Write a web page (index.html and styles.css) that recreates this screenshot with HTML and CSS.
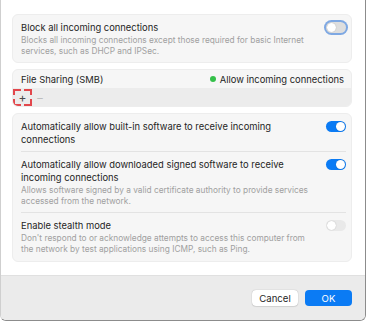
FILE: index.html
```html
<!DOCTYPE html>
<html>
<head>
<meta charset="utf-8">
<link rel="stylesheet" href="styles.css">
</head>
<body>
<div class="window">
  <div class="content">
    <section class="card">
      <div class="row">
        <div class="text">
          <div class="title">Block all incoming connections</div>
          <div class="desc">Blocks all incoming connections except those required for basic Internet services, such as DHCP and IPSec.</div>
        </div>
        <span class="toggle off focus"><span class="knob"></span></span>
      </div>
    </section>

    <section class="card list">
      <div class="app-row">
        <span class="app-name">File Sharing (SMB)</span>
        <span class="status"><span class="dot"></span>Allow incoming connections</span>
      </div>
      <div class="toolbar">
        <span class="tool add">+
          <svg class="mark" width="19" height="17" viewBox="0 0 19 17"><path d="M1 6V1H8M11 1H18V6M18 10V16H11M8 16H1V10" fill="none" stroke="#e2474c" stroke-width="2"/></svg>
        </span>
        <span class="tool remove">−</span>
      </div>
    </section>

    <section class="card">
      <div class="row sep">
        <div class="text">
          <div class="title">Automatically allow built-in software to receive incoming connections</div>
        </div>
        <span class="toggle on"><span class="knob"></span></span>
      </div>
      <div class="row sep">
        <div class="text">
          <div class="title">Automatically allow downloaded signed software to receive incoming connections</div>
          <div class="desc">Allows software signed by a valid certificate authority to provide services accessed from the network.</div>
        </div>
        <span class="toggle on"><span class="knob"></span></span>
      </div>
      <div class="row last">
        <div class="text">
          <div class="title">Enable stealth mode</div>
          <div class="desc">Don't respond to or acknowledge attempts to access this computer from the network by test applications using ICMP, such as Ping.</div>
        </div>
        <span class="toggle off dim"><span class="knob"></span></span>
      </div>
    </section>
  </div>
  <footer class="footer">
    <button class="btn cancel">Cancel</button>
    <button class="btn ok">OK</button>
  </footer>
</div>
</body>
</html>
```
FILE: styles.css
```css
html, body {
  margin: 0;
  padding: 0;
  background: #ffffff;
}
body {
  font-family: "Inter", "Liberation Sans", sans-serif;
  color: #1f1f1f;
  width: 368px;
  height: 323px;
  overflow: hidden;
}
.window {
  width: 366px;
  height: 321px;
  border-right: 1px solid #8c8c8c;
  border-bottom: 1px solid #8c8c8c;
  border-left: 1px solid #cfcfcf;
  border-bottom-left-radius: 6px;
  border-bottom-right-radius: 6px;
  box-sizing: border-box;
  display: flex;
  flex-direction: column;
  overflow: hidden;
}
.content {
  padding: 14px 13px 0 11px;
  display: flex;
  flex-direction: column;
  gap: 6px;
  flex: 1;
}
.card {
  background: #f6f6f6;
  border: 1px solid #ededed;
  border-radius: 6px;
  padding: 0 5px 0 8px;
}
.row {
  display: flex;
  align-items: flex-start;
  justify-content: space-between;
  padding: 6px 0 5px;
  gap: 10px;
}
.row.sep {
  border-bottom: 1px solid #e3e3e3;
}
.row.last {
  padding-bottom: 6px;
}
.title {
  font-size: 9.4px;
  line-height: 13px;
  color: #1f1f1f;
}
.desc {
  font-size: 8.3px;
  line-height: 11px;
  color: #a0a0a0;
  margin-top: 1px;
}
.toggle {
  flex: none;
  width: 20px;
  height: 11px;
  border-radius: 6px;
  position: relative;
  margin-top: 1px;
}
.toggle .knob {
  position: absolute;
  top: 1px;
  width: 9px;
  height: 9px;
  border-radius: 50%;
  background: #ffffff;
  box-shadow: 0 0 1px rgba(0,0,0,0.3);
}
.toggle.on {
  background: #0b7bf4;
}
.toggle.on .knob {
  right: 1px;
}
.toggle.off {
  background: #dedede;
}
.toggle.off .knob {
  left: 1px;
}
.toggle.focus {
  box-shadow: 0 0 0 2px #7ea8e3;
}
.toggle.dim {
  background: #e9e9e9;
}
.list {
  padding: 0;
  overflow: hidden;
}
.app-row {
  display: flex;
  justify-content: space-between;
  align-items: center;
  padding: 0 7px 0 8px;
  height: 18px;
  font-size: 9.4px;
  color: #1f1f1f;
}
.status {
  display: flex;
  align-items: center;
  gap: 4px;
}
.dot {
  width: 6px;
  height: 6px;
  border-radius: 50%;
  background: #34c04a;
}
.toolbar {
  background: #ececec;
  height: 18px;
  display: flex;
  align-items: center;
  gap: 1px;
}
.tool {
  width: 19px;
  height: 17px;
  display: flex;
  align-items: center;
  justify-content: center;
  font-size: 12px;
  color: #4a4a4a;
  position: relative;
}
.tool .mark {
  position: absolute;
  left: 0;
  top: 0;
}
.tool.remove {
  color: #bdbdbd;
  width: 14px;
}
.footer {
  background: #ebebeb;
  height: 44px;
  display: flex;
  justify-content: flex-end;
  align-items: center;
  gap: 7px;
  padding-right: 13px;
  border-top: 1px solid #e0e0e0;
}
.btn {
  font-family: "Inter", "Liberation Sans", sans-serif;
  font-size: 9.6px;
  height: 16px;
  border: none;
  border-radius: 4px;
  padding: 0;
}
.btn.cancel {
  width: 46px;
  background: #ffffff;
  color: #1f1f1f;
  box-shadow: 0 0 1px rgba(0,0,0,0.35), 0 1px 1px rgba(0,0,0,0.08);
}
.btn.ok {
  width: 47px;
  background: #0b7bf4;
  color: #ffffff;
}
```
